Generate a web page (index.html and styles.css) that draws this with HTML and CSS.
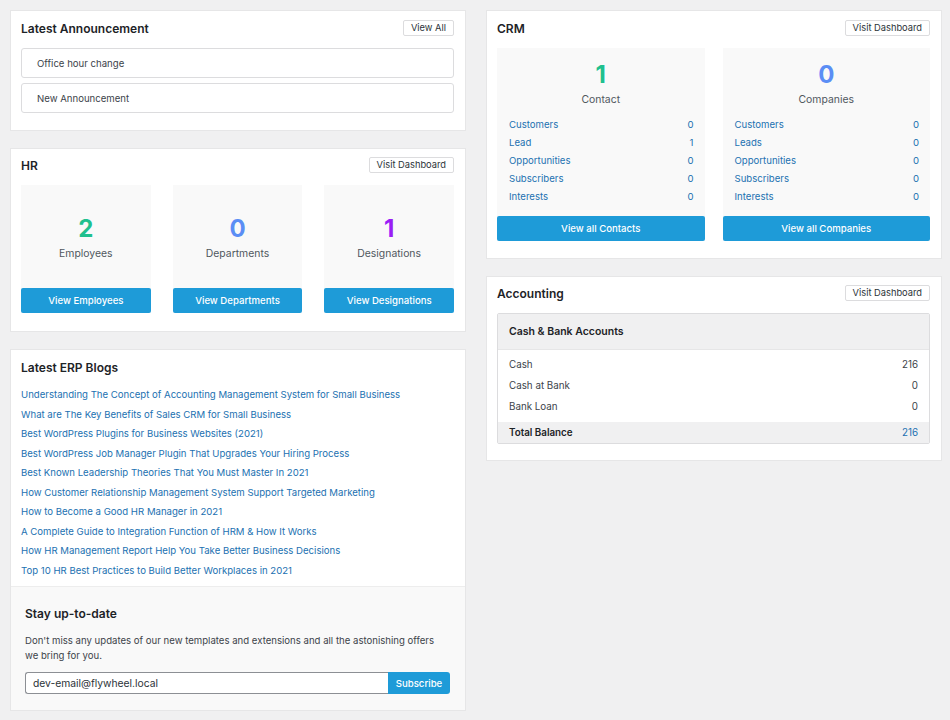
FILE: index.html
```html
<!DOCTYPE html>
<html lang="en">
<head>
<meta charset="utf-8">
<title>ERP Dashboard</title>
<link rel="stylesheet" href="styles.css">
</head>
<body>
<div class="dashboard">
  <div class="column">
    <section class="panel panel-announce">
      <div class="panel-head">
        <h2 class="panel-title">Latest Announcement</h2>
        <a class="small-btn" href="#">View All</a>
      </div>
      <ul class="announce-list">
        <li class="announce-item">Office hour change</li>
        <li class="announce-item">New Announcement</li>
      </ul>
    </section>

    <section class="panel panel-hr">
      <div class="panel-head">
        <h2 class="panel-title">HR</h2>
        <a class="small-btn" href="#">Visit Dashboard</a>
      </div>
      <div class="hr-grid">
        <div class="stat-card">
          <div class="stat-body">
            <div class="stat-num green">2</div>
            <div class="stat-label">Employees</div>
          </div>
          <a class="blue-btn" href="#">View Employees</a>
        </div>
        <div class="stat-card">
          <div class="stat-body">
            <div class="stat-num blue">0</div>
            <div class="stat-label">Departments</div>
          </div>
          <a class="blue-btn" href="#">View Departments</a>
        </div>
        <div class="stat-card">
          <div class="stat-body">
            <div class="stat-num purple">1</div>
            <div class="stat-label">Designations</div>
          </div>
          <a class="blue-btn" href="#">View Designations</a>
        </div>
      </div>
    </section>

    <section class="panel panel-blogs">
      <div class="blogs-inner">
        <h2 class="panel-title">Latest ERP Blogs</h2>
        <ul class="blog-list">
          <li><a href="#">Understanding The Concept of Accounting Management System for Small Business</a></li>
          <li><a href="#">What are The Key Benefits of Sales CRM for Small Business</a></li>
          <li><a href="#">Best WordPress Plugins for Business Websites (2021)</a></li>
          <li><a href="#">Best WordPress Job Manager Plugin That Upgrades Your Hiring Process</a></li>
          <li><a href="#">Best Known Leadership Theories That You Must Master In 2021</a></li>
          <li><a href="#">How Customer Relationship Management System Support Targeted Marketing</a></li>
          <li><a href="#">How to Become a Good HR Manager in 2021</a></li>
          <li><a href="#">A Complete Guide to Integration Function of HRM &amp; How It Works</a></li>
          <li><a href="#">How HR Management Report Help You Take Better Business Decisions</a></li>
          <li><a href="#">Top 10 HR Best Practices to Build Better Workplaces in 2021</a></li>
        </ul>
      </div>
      <div class="subscribe">
        <h3 class="subscribe-title">Stay up-to-date</h3>
        <p class="subscribe-text">Don't miss any updates of our new templates and extensions and all the astonishing offers we bring for you.</p>
        <form class="subscribe-form">
          <input class="subscribe-input" type="email" value="dev-email@flywheel.local">
          <button class="subscribe-btn" type="button">Subscribe</button>
        </form>
      </div>
    </section>
  </div>

  <div class="column">
    <section class="panel panel-crm">
      <div class="panel-head">
        <h2 class="panel-title">CRM</h2>
        <a class="small-btn" href="#">Visit Dashboard</a>
      </div>
      <div class="crm-grid">
        <div class="crm-card">
          <div class="crm-top">
            <div class="stat-num green">1</div>
            <div class="stat-label">Contact</div>
          </div>
          <ul class="crm-rows">
            <li><a href="#">Customers</a><span>0</span></li>
            <li><a href="#">Lead</a><span>1</span></li>
            <li><a href="#">Opportunities</a><span>0</span></li>
            <li><a href="#">Subscribers</a><span>0</span></li>
            <li><a href="#">Interests</a><span>0</span></li>
          </ul>
          <a class="blue-btn" href="#">View all Contacts</a>
        </div>
        <div class="crm-card">
          <div class="crm-top">
            <div class="stat-num blue">0</div>
            <div class="stat-label">Companies</div>
          </div>
          <ul class="crm-rows">
            <li><a href="#">Customers</a><span>0</span></li>
            <li><a href="#">Leads</a><span>0</span></li>
            <li><a href="#">Opportunities</a><span>0</span></li>
            <li><a href="#">Subscribers</a><span>0</span></li>
            <li><a href="#">Interests</a><span>0</span></li>
          </ul>
          <a class="blue-btn" href="#">View all Companies</a>
        </div>
      </div>
    </section>

    <section class="panel panel-acct">
      <div class="panel-head">
        <h2 class="panel-title">Accounting</h2>
        <a class="small-btn" href="#">Visit Dashboard</a>
      </div>
      <div class="acct-box">
        <div class="acct-head">Cash &amp; Bank Accounts</div>
        <ul class="acct-rows">
          <li><span>Cash</span><span>216</span></li>
          <li><span>Cash at Bank</span><span>0</span></li>
          <li><span>Bank Loan</span><span>0</span></li>
        </ul>
        <div class="acct-total"><span>Total Balance</span><a href="#">216</a></div>
      </div>
    </section>
  </div>
</div>
</body>
</html>
```

FILE: styles.css
```css
* { box-sizing: border-box; }
html, body { margin: 0; padding: 0; }
body {
  background: #f0f0f1;
  font-family: Inter, "Liberation Sans", Arial, sans-serif;
  font-size: 9.6px;
  color: #3c434a;
}
ul { list-style: none; margin: 0; padding: 0; }
a { text-decoration: none; color: #2271b1; }
h2, h3, p { margin: 0; }

.dashboard {
  display: grid;
  grid-template-columns: 456px 456px;
  column-gap: 20px;
  padding: 10px 8px 0 10px;
  align-items: start;
}
.column { display: flex; flex-direction: column; gap: 17px; }

.panel {
  background: #fff;
  border: 1px solid #e6e6e7;
}

.panel-head {
  display: flex;
  align-items: center;
  justify-content: space-between;
  height: 18px;
  margin-bottom: 11px;
}
.panel-title {
  font-size: 12px;
  font-weight: 600;
  color: #1d2327;
}
.small-btn {
  display: inline-block;
  font-size: 9.3px;
  line-height: 14px;
  padding: 0 7px;
  border: 1px solid #dcdcde;
  border-radius: 2px;
  color: #2c3338;
  background: #fff;
}

/* announcements */
.panel-announce { padding: 8px 11px 17px 10px; }
.announce-list { display: flex; flex-direction: column; gap: 5px; }
.announce-item {
  height: 30px;
  line-height: 29px;
  padding-left: 15px;
  border: 1px solid #dcdcde;
  border-radius: 3px;
  color: #3c434a;
}

/* HR */
.panel-hr { padding: 7px 11px 18px 10px; }
.hr-grid {
  display: grid;
  grid-template-columns: repeat(3, 1fr);
  column-gap: 22px;
}
.stat-card {
  background: #f9f9f9;
  display: flex;
  flex-direction: column;
  height: 128px;
}
.stat-body {
  flex: 1;
  display: flex;
  flex-direction: column;
  align-items: center;
  padding-top: 29px;
}
.stat-num {
  font-size: 24px;
  font-weight: 700;
  line-height: 30px;
}
.stat-label {
  font-size: 10.4px;
  color: #50575e;
  margin-top: 3px;
}
.green { color: #20c08e; }
.blue { color: #5b8ef5; }
.purple { color: #9b1ef5; }

.blue-btn {
  display: block;
  height: 25px;
  line-height: 25px;
  text-align: center;
  background: #1e9bd8;
  color: #fff;
  font-size: 9.6px;
  font-weight: 500;
  border-radius: 2px;
}

/* Blogs */
.blogs-inner { padding: 9px 11px 6px 10px; }
.panel-blogs .panel-title { line-height: 17px; margin-bottom: 9px; }
.blog-list li { line-height: 19.55px; }
.blog-list a { color: #2271b1; font-size: 9.6px; }

.subscribe {
  background: #f9f9f9;
  border-top: 1px solid #ededed;
  padding: 18px 15px 16px 14px;
}
.subscribe-title {
  font-size: 12px;
  font-weight: 600;
  color: #1d2327;
  line-height: 18px;
  margin-bottom: 10px;
}
.subscribe-text {
  font-size: 9.6px;
  line-height: 15px;
  color: #3c434a;
  margin-bottom: 9px;
  max-width: 418px;
}
.subscribe-form { display: flex; height: 22px; }
.subscribe-input {
  flex: 1;
  height: 22px;
  border: 1px solid #8c8f94;
  border-right: none;
  border-radius: 3px 0 0 3px;
  padding: 0 7px;
  font-family: inherit;
  font-size: 10.3px;
  color: #2c3338;
  background: #fff;
}
.subscribe-btn {
  width: 62px;
  height: 22px;
  border: none;
  border-radius: 0 3px 3px 0;
  background: #1e9bd8;
  color: #fff;
  font-family: inherit;
  font-size: 9.6px;
  font-weight: 500;
}

/* CRM */
.panel-crm { padding: 8px 11px 17px 10px; }
.crm-grid {
  display: grid;
  grid-template-columns: 1fr 1fr;
  column-gap: 18px;
}
.crm-card {
  background: #f9f9f9;
  display: flex;
  flex-direction: column;
  height: 193px;
}
.crm-top {
  display: flex;
  flex-direction: column;
  align-items: center;
  padding-top: 12px;
}
.crm-top .stat-label { margin-top: 3px; }
.crm-rows { padding: 10px 11px 0 12px; flex: 1; }
.crm-rows li {
  display: flex;
  justify-content: space-between;
  line-height: 18px;
  font-size: 9.6px;
}
.crm-rows span { color: #2271b1; }

/* Accounting */
.panel-acct { padding: 7px 11px 16px 10px; }
.acct-box {
  border: 1px solid #dcdcde;
  border-radius: 2px;
}
.acct-head {
  background: #f0f0f1;
  height: 36px;
  line-height: 35px;
  padding-left: 11px;
  font-size: 10.5px;
  font-weight: 600;
  color: #1d2327;
  border-bottom: 1px solid #e6e6e7;
}
.acct-rows { padding: 4px 11px 5px 11px; }
.acct-rows li {
  display: flex;
  justify-content: space-between;
  line-height: 21px;
  font-size: 9.8px;
  color: #3c434a;
}
.acct-total {
  display: flex;
  justify-content: space-between;
  background: #f0f0f1;
  height: 21px;
  line-height: 21px;
  padding: 0 11px;
  font-size: 9.8px;
  font-weight: 600;
  color: #1d2327;
}
.acct-total a { font-weight: 400; }
```
